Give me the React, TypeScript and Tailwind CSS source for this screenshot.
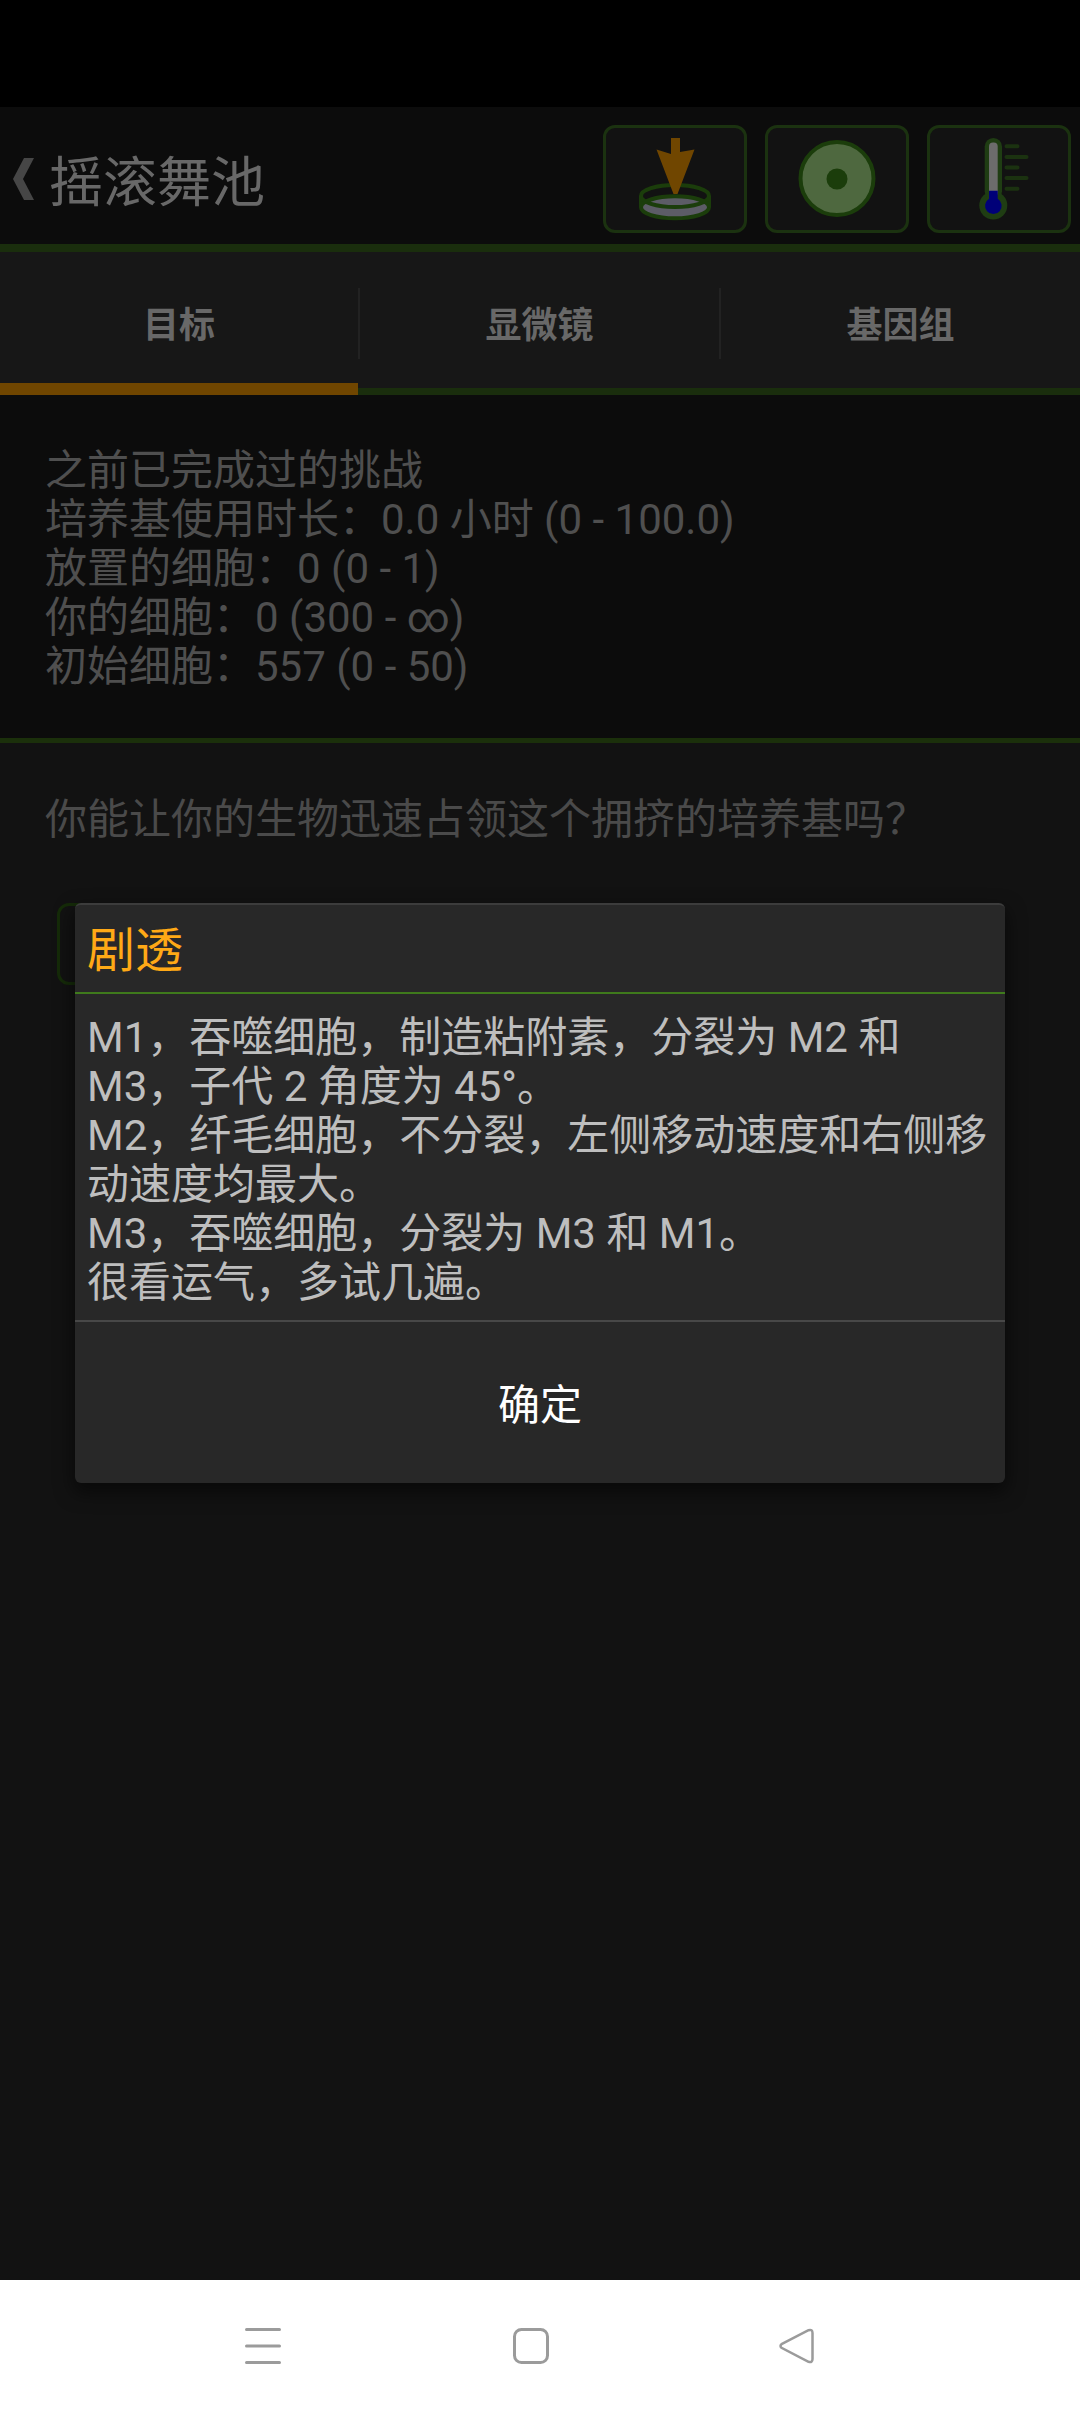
const tabs = [
  { label: '目标', active: true },
  { label: '显微镜', active: false },
  { label: '基因组', active: false },
];

const stats = [
  '之前已完成过的挑战',
  '培养基使用时长：0.0 小时 (0 - 100.0)',
  '放置的细胞：0 (0 - 1)',
  '你的细胞：0 (300 - ∞)',
  '初始细胞：557 (0 - 50)',
];

const spoiler = [
  'M1，吞噬细胞，制造粘附素，分裂为 M2 和',
  'M3，子代 2 角度为 45°。',
  'M2，纤毛细胞，不分裂，左侧移动速度和右侧移',
  '动速度均最大。',
  'M3，吞噬细胞，分裂为 M3 和 M1。',
  '很看运气，多试几遍。',
];

function DishIcon() {
  return (
    <svg viewBox="0 0 144 108" className="h-[108px] w-36 shrink-0" fill="none">
      <ellipse cx="72" cy="82.3" rx="34" ry="11" fill="#5c5c66" />
      <path d="M38 71a34 11 0 0 1 68 0a34 11 0 0 1 -68 0" stroke="#1b3d0b" strokeWidth="4" />
      <path d="M38 71v11.3a34 11 0 0 0 68 0V71" stroke="#1b3d0b" strokeWidth="4" />
      <path d="M38 82.3a34 11 0 0 1 68 0" stroke="#1b3d0b" strokeWidth="4" />
      <path d="M68 13h9v14l14.500-2.500L74.500 69h-4L53.500 24.500L68 29z" fill="#704600" />
    </svg>
  );
}

function CellIcon() {
  return (
    <svg viewBox="0 0 144 108" className="h-[108px] w-36 shrink-0">
      <circle cx="72" cy="53.500" r="36.500" fill="#4e683f" stroke="#1b3d0b" strokeWidth="4" />
      <circle cx="72" cy="54" r="10.500" fill="#1b3d0b" />
    </svg>
  );
}

function ThermometerIcon() {
  return (
    <svg viewBox="0 0 144 108" className="h-[108px] w-36 shrink-0">
      <circle cx="66.300" cy="80.500" r="14" fill="#1f3d13" />
      <rect x="57.700" y="13" width="17.300" height="62" rx="8.600" fill="#1f3d13" />
      <rect x="62" y="17.500" width="8.700" height="54" rx="4" fill="#6c6c6c" />
      <path d="M62 65.700h8.700v8a8.300 8.300 0 1 1 -8.700 0z" fill="#000078" />
      <path
        d="M79.500 21.300h11M79.500 32h20M79.500 42.500h11M79.500 53h20M79.500 63.700h11"
        stroke="#1b3210"
        strokeWidth="4"
        strokeLinecap="round"
      />
    </svg>
  );
}

const tools = [
  { name: 'dish', icon: DishIcon },
  { name: 'cell', icon: CellIcon },
  { name: 'thermometer', icon: ThermometerIcon },
];

function SpoilerDialog() {
  return (
    <div className="absolute top-[903px] left-[75px] flex h-[580px] w-[930px] flex-col rounded-md border-t-2 border-[#3c3c3c] bg-[#282828] shadow-[0_8px_18px_2px_rgba(0,0,0,0.5)]">
      <h2 className="flex h-[89px] items-center border-b-2 border-[#3f7a1c] px-3 pt-1 text-5xl text-[#ffa916]">剧透</h2>
      <div className="h-[328px] border-b-2 border-[#484848] px-3 pt-[19px] leading-[49px] text-[#bebebe]">
        {spoiler.map((line) => (
          <p key={line} className="whitespace-nowrap">{line}</p>
        ))}
      </div>
      <button className="flex flex-1 items-center justify-center pt-[5px] text-white">确定</button>
    </div>
  );
}

export default function App() {
  return (
    <div className="relative flex h-[2412px] w-[1080px] flex-col overflow-hidden bg-[#121212] font-['Roboto','Noto_Sans_CJK_SC',sans-serif] text-[42px]">
      <div className="h-[107px] bg-black" />

      <header className="flex h-[145px] items-start justify-between border-b-8 border-[#1a2e0d] bg-[#0c0c0c] pr-[9px]">
        <div className="flex h-[144px] items-center pl-[13px]">
          <svg viewBox="0 0 21 42" className="h-[42px] w-[21px]">
            <path d="M11 0h10L10 21l11 21H11L0 21z" fill="#464646" />
          </svg>
          <h1 className="ml-[15px] pt-[9px] text-[54px] leading-none text-[#686868]">摇滚舞池</h1>
        </div>
        <div className="mt-[18px] flex gap-[18px]">
          {tools.map(({ name, icon: Icon }) => (
            <button
              key={name}
              className="flex h-[108px] w-36 items-center justify-center rounded-xl border-3 border-[#1b3210] bg-[#121212]"
            >
              <Icon />
            </button>
          ))}
        </div>
      </header>

      <nav className="grid h-[143px] grid-cols-[358px_1fr_1fr] bg-[#171717] text-4xl font-bold text-[#686868]">
        {tabs.map(({ label, active }, i) => (
          <div
            key={label}
            className={active ? 'flex flex-col border-b-12 border-[#704600]' : 'flex flex-col border-b-7 border-[#1a2e0d]'}
          >
            <div className="mt-9 flex h-[71px] items-center">
              {i > 0 && <span className="h-full w-[2px] bg-[#222222]" />}
              <span className="flex-1 pt-[5px] text-center">{label}</span>
            </div>
          </div>
        ))}
      </nav>

      <section className="h-[348px] border-b-[5px] border-[#1b300b] bg-[#0c0c0c] px-[45px] pt-[51px] leading-[49px] text-[#4f4f4f]">
        {stats.map((line) => (
          <p key={line} className="whitespace-nowrap">{line}</p>
        ))}
      </section>

      <section className="flex-1 text-[#4a4a4a]">
        <p className="px-[45px] pt-[52px] leading-[49px]">你能让你的生物迅速占领这个拥挤的培养基吗？</p>
        <div className="mt-[59px] ml-[57px] h-[82px] w-[320px] rounded-xl border-3 border-[#152b09]" />
      </section>

      <footer className="flex h-[132px] items-center bg-white">
        <svg viewBox="0 0 36 36" className="ml-[245px] size-9" stroke="#9b9b9b" strokeWidth="3" strokeLinecap="round">
          <path d="M1.500 1.500h33M1.500 18h33M1.500 34.500h33" />
        </svg>
        <svg viewBox="0 0 36 36" className="ml-[232px] size-9" fill="none" stroke="#9b9b9b" strokeWidth="3">
          <rect x="1.500" y="1.500" width="33" height="33" rx="7" />
        </svg>
        <svg viewBox="0 0 36 36" className="ml-[230px] size-9" fill="none" stroke="#9b9b9b" strokeWidth="2.500">
          <path d="M2.500 16.200L29.500 2.200Q33.500 1 33.500 5V31Q33.500 35 29.500 33.800L2.500 19.800Q0.500 18 2.500 16.200z" />
        </svg>
      </footer>

      <SpoilerDialog />
    </div>
  );
}
